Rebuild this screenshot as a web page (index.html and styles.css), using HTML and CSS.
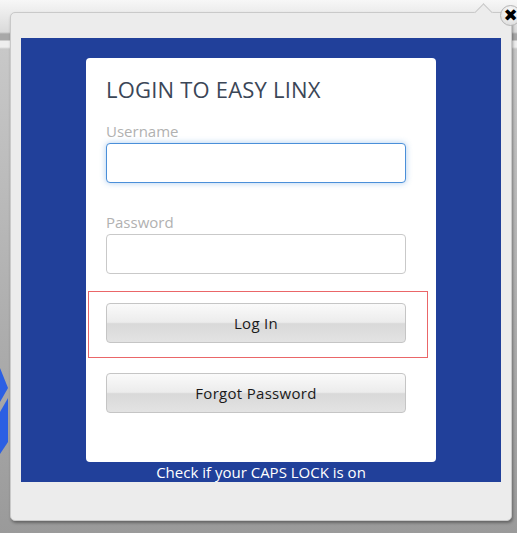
FILE: index.html
```html
<!DOCTYPE html>
<html lang="en">
<head>
  <meta charset="UTF-8" />
  <meta name="viewport" content="width=device-width, initial-scale=1.0"/>
  <title>Easy Linx Login</title>
  <link rel="stylesheet" href="styles.css">
</head>
<body>
  <!-- piece of the page behind the popup -->
  <svg class="backdrop-logo" viewBox="0 0 10 90" xmlns="http://www.w3.org/2000/svg">
    <polygon points="0,0 8,20 0,34" fill="#2b5fe3" />
    <polygon points="0,44 8,30 8,74 0,86" fill="#2b5fe3" />
  </svg>

  <div class="popup">
    <span class="notch"></span>
    <button class="close" aria-label="Close">&#x2716;</button>

    <div class="frame">
      <div class="card">
        <h1>LOGIN TO EASY LINX</h1>

        <label class="field-label" for="username">Username</label>
        <input class="field focused" type="text" id="username">

        <label class="field-label" for="password">Password</label>
        <input class="field" type="password" id="password">

        <div class="login-row">
          <button class="btn">Log In</button>
        </div>

        <button class="btn forgot">Forgot Password</button>
      </div>
      <p class="caps-note">Check if your CAPS LOCK is on</p>
    </div>
  </div>
</body>
</html>
```

FILE: styles.css
```css
:root {
  --blue: #21409a;
  --dialog: #ececec;
  --title: #3b4657;
  --label: #b1b1b1;
}

html, body {
  height: 100%;
}

body {
  margin: 0;
  overflow: hidden;
  font-family: 'Open Sans', 'Liberation Sans', sans-serif;
  background: linear-gradient(to bottom,
    #f7f7f7 0, #dadada 32px, #a8a8a8 34px, #a8a8a8 40px,
    #eeeeee 41px, #eeeeee 47px, #c8c8c8 49px, #9a9a9a 100%);
  position: relative;
}

.backdrop-logo {
  position: absolute;
  left: 0;
  top: 368px;
  width: 10px;
  height: 90px;
}

.popup {
  position: relative;
  margin: 12px 0 0 10px;
  width: 502px;
  height: 509px;
  box-sizing: border-box;
  background-color: var(--dialog);
  border: 1px solid #c9c9c9;
  border-radius: 5px;
  box-shadow: 1px 2px 3px rgba(0,0,0,0.35);
  padding: 25px 10px 0 10px;
}

.notch {
  position: absolute;
  top: -7px;
  left: 466px;
  width: 12px;
  height: 12px;
  background-color: var(--dialog);
  border-top: 1px solid #c9c9c9;
  border-left: 1px solid #c9c9c9;
  transform: rotate(45deg);
}

.close {
  position: absolute;
  top: -8px;
  left: 489px;
  width: 21px;
  height: 21px;
  padding: 0;
  border-radius: 50%;
  border: 1px solid #b5b5b5;
  background: radial-gradient(circle at 50% 35%, #ffffff, #d6d6d6);
  color: #000;
  font-family: 'DejaVu Sans', sans-serif;
  font-size: 17px;
  font-weight: bold;
  line-height: 19px;
  text-align: center;
}

.frame {
  background-color: var(--blue);
  padding: 20px 65px 0 65px;
  height: 444px;
  box-sizing: border-box;
}

.card {
  background-color: #fff;
  border-radius: 4px;
  height: 404px;
  box-sizing: border-box;
  padding: 18px 30px 0 20px;
}

.card h1 {
  margin: 0 0 19px;
  font-size: 22px;
  line-height: 26px;
  font-weight: 400;
  letter-spacing: 0.2px;
  color: var(--title);
}

.field-label {
  display: block;
  font-size: 15px;
  line-height: 20px;
  color: var(--label);
  margin-bottom: 2px;
}

.field {
  display: block;
  width: 300px;
  height: 40px;
  box-sizing: border-box;
  border: 1px solid #c9c9c9;
  border-radius: 4px;
  margin: 0 0 29px;
  padding: 0 10px;
  font-size: 15px;
  outline: none;
}

.field.focused {
  border-color: #4a8fd9;
  box-shadow: 0 0 6px rgba(74,143,217,0.45);
}

.login-row {
  margin: -12px -22px 0 -18px;
  padding: 11px 22px 14px 17px;
  border: 1px solid #ea6668;
}

.btn {
  display: block;
  width: 300px;
  height: 40px;
  border: 1px solid #c5c5c5;
  border-radius: 4px;
  background: linear-gradient(to bottom, #fafafa 0, #ececec 48%, #d9d9d9 52%, #e3e3e3 100%);
  font-family: inherit;
  font-size: 15px;
  letter-spacing: 0.3px;
  color: #1a1a1a;
  cursor: pointer;
}

.btn.forgot {
  margin-top: 15px;
}

.caps-note {
  margin: 0;
  text-align: center;
  color: #fff;
  font-size: 15px;
  line-height: 20px;
}
```
